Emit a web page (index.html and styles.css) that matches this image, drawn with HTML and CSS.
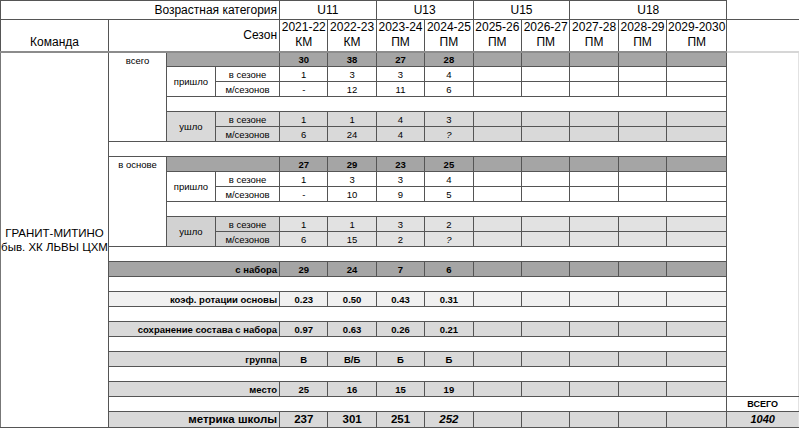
FILE: index.html
```html
<!DOCTYPE html>
<html lang="ru">
<head>
<meta charset="utf-8">
<title>Метрика школы</title>
<link rel="stylesheet" href="styles.css">
</head>
<body>
<table class="sheet">
<colgroup>
<col class="c-team"><col class="c-l1"><col class="c-l2"><col class="c-l3">
<col class="c-s"><col class="c-s"><col class="c-s"><col class="c-s"><col class="c-s"><col class="c-s"><col class="c-s"><col class="c-s"><col class="c-s9"><col class="c-total">
</colgroup>
<thead>
<tr class="h1">
<th colspan="4" class="rlabel">Возрастная категория</th>
<th colspan="2">U11</th><th colspan="2">U13</th><th colspan="2">U15</th><th colspan="3">U18</th>
<th class="hblank"></th>
</tr>
<tr class="h2">
<th class="team">Команда</th>
<th colspan="3" class="rlabel">Сезон</th>
<th>2021-22<br>КМ</th><th>2022-23<br>КМ</th><th>2023-24<br>ПМ</th><th>2024-25<br>ПМ</th><th>2025-26<br>ПМ</th><th>2026-27<br>ПМ</th><th>2027-28<br>ПМ</th><th>2028-29<br>ПМ</th><th>2029-2030<br>ПМ</th>
<th class="hblank"></th>
</tr>
</thead>
<tbody>
<tr class="dark">
<td rowspan="25" class="teamname">ГРАНИТ-МИТИНО<br>быв. ХК ЛЬВЫ ЦХМ</td>
<td rowspan="6" class="grp">всего</td>
<td colspan="2" class="fill"></td>
<td>30</td><td>38</td><td>27</td><td>28</td><td></td><td></td><td></td><td></td><td></td>
<td rowspan="23" class="totalcol"></td>
</tr>
<tr class="in">
<td rowspan="2">пришло</td><td>в сезоне</td>
<td>1</td><td>3</td><td>3</td><td>4</td><td></td><td></td><td></td><td></td><td></td>
</tr>
<tr class="in">
<td>м/сезонов</td>
<td>-</td><td>12</td><td>11</td><td>6</td><td></td><td></td><td></td><td></td><td></td>
</tr>
<tr class="sp"><td colspan="11"></td></tr>
<tr class="out">
<td rowspan="2">ушло</td><td>в сезоне</td>
<td>1</td><td>1</td><td>4</td><td>3</td><td></td><td></td><td></td><td></td><td></td>
</tr>
<tr class="out">
<td>м/сезонов</td>
<td>6</td><td>24</td><td>4</td><td class="q">?</td><td></td><td></td><td></td><td></td><td></td>
</tr>
<tr class="sp"><td colspan="12"></td></tr>

<tr class="dark">
<td rowspan="6" class="grp">в основе</td>
<td colspan="2" class="fill"></td>
<td>27</td><td>29</td><td>23</td><td>25</td><td></td><td></td><td></td><td></td><td></td>
</tr>
<tr class="in">
<td rowspan="2">пришло</td><td>в сезоне</td>
<td>1</td><td>3</td><td>3</td><td>4</td><td></td><td></td><td></td><td></td><td></td>
</tr>
<tr class="in">
<td>м/сезонов</td>
<td>-</td><td>10</td><td>9</td><td>5</td><td></td><td></td><td></td><td></td><td></td>
</tr>
<tr class="sp"><td colspan="11"></td></tr>
<tr class="out out2">
<td rowspan="2" class="lbl2">ушло</td><td class="lbl2">в сезоне</td>
<td>1</td><td>1</td><td>3</td><td>2</td><td></td><td></td><td></td><td></td><td></td>
</tr>
<tr class="out out2">
<td class="lbl2">м/сезонов</td>
<td>6</td><td>15</td><td>2</td><td class="q">?</td><td></td><td></td><td></td><td></td><td></td>
</tr>
<tr class="sp"><td colspan="12"></td></tr>

<tr class="dark sum">
<td colspan="3" class="rl">с набора</td>
<td>29</td><td>24</td><td>7</td><td>6</td><td></td><td></td><td></td><td></td><td></td>
</tr>
<tr class="sp"><td colspan="12"></td></tr>
<tr class="pale sum">
<td colspan="3" class="rl">коэф. ротации основы</td>
<td>0.23</td><td>0.50</td><td>0.43</td><td>0.31</td><td></td><td></td><td></td><td></td><td></td>
</tr>
<tr class="sp"><td colspan="12"></td></tr>
<tr class="light sum">
<td colspan="3" class="rl">сохранение состава с набора</td>
<td>0.97</td><td>0.63</td><td>0.26</td><td>0.21</td><td></td><td></td><td></td><td></td><td></td>
</tr>
<tr class="sp"><td colspan="12"></td></tr>
<tr class="light sum">
<td colspan="3" class="rl">группа</td>
<td>В</td><td>В/Б</td><td>Б</td><td>Б</td><td></td><td></td><td></td><td></td><td></td>
</tr>
<tr class="sp"><td colspan="12"></td></tr>
<tr class="light sum">
<td colspan="3" class="rl">место</td>
<td>25</td><td>16</td><td>15</td><td>19</td><td></td><td></td><td></td><td></td><td></td>
</tr>
<tr class="sp"><td colspan="12"></td><td class="totlbl">ВСЕГО</td></tr>
<tr class="light metric">
<td colspan="3" class="rl">метрика школы</td>
<td>237</td><td>301</td><td>251</td><td class="q">252</td><td></td><td></td><td></td><td></td><td></td>
<td class="totval">1040</td>
</tr>
</tbody>
</table>
</body>
</html>
```

FILE: styles.css
```css
html, body {
  margin: 0;
  padding: 0;
  background: #ffffff;
}

body {
  font-family: "Liberation Sans", Arial, sans-serif;
  color: #000000;
}

.sheet {
  border-collapse: collapse;
  table-layout: fixed;
  width: 798px;
}

.sheet th,
.sheet td {
  border: 1px solid #555555;
  padding: 0;
  text-align: center;
  vertical-align: middle;
  font-weight: normal;
  white-space: nowrap;
  overflow: hidden;
}

.c-team { width: 108px; }
.c-l1 { width: 58px; }
.c-l2 { width: 49px; }
.c-l3 { width: 64px; }
.c-s { width: 48.4px; }
.c-s9 { width: 60px; }
.c-total { width: 72px; }

.sheet thead th {
  font-size: 12px;
  line-height: 15px;
}

.h1 { height: 19px; }
.h2 { height: 32px; }

.sheet .h2 th {
  border-bottom: 2px solid #8c8c8c;
}

.sheet .rlabel {
  text-align: right;
  padding-right: 2px;
}

.sheet .team {
  vertical-align: bottom;
  padding-bottom: 1px;
}

.sheet .h1 .hblank {
  border-top: none;
  border-right: none;
  border-bottom: none;
}

.sheet .h2 .hblank {
  border-right: none;
  border-bottom: 2px solid #d6d6d6;
}

.sheet tbody tr { height: 15px; }

.sheet tbody td {
  font-size: 9.5px;
  line-height: 13px;
}

.sheet .teamname {
  font-size: 11.5px;
  line-height: 14px;
  border-left: 1px solid #777777;
  background: #ffffff;
}

.sheet .grp {
  vertical-align: top;
  padding-top: 1px;
  background: #ffffff;
}

.sheet .dark td { background: #a5a5a5; font-weight: bold; }
.sheet .dark td.grp,
.sheet .dark td.teamname,
.sheet .dark td.totalcol { background: #ffffff; font-weight: normal; }

.sheet .in td { background: #ffffff; }
.sheet .out td { background: #d9d9d9; }
.sheet .out2 td { background: #e2e2e2; }
.sheet .out2 td.lbl2 { background: #d2d2d2; }

.sheet .pale td { background: #f0f0f0; }
.sheet .light td { background: #d9d9d9; }

.sheet .sum td { font-weight: bold; }

.sheet td.rl {
  text-align: right;
  padding-right: 2px;
}

.sheet td.q { font-style: italic; }

.sheet .sp td { background: #ffffff; }

.sheet td.totalcol {
  background: #ffffff;
  border-top: 2px solid #d6d6d6;
  border-right: 1px solid #e2e2e2;
}

.sheet .metric td {
  font-size: 11.5px;
  line-height: 15px;
  font-weight: bold;
}

.sheet .sp td.totlbl {
  font-size: 9px;
  font-weight: bold;
  border-right: 1px solid #e2e2e2;
}

.sheet .metric td.totval {
  font-style: italic;
  font-size: 11px;
  border-right: 1px solid #e2e2e2;
}
```
